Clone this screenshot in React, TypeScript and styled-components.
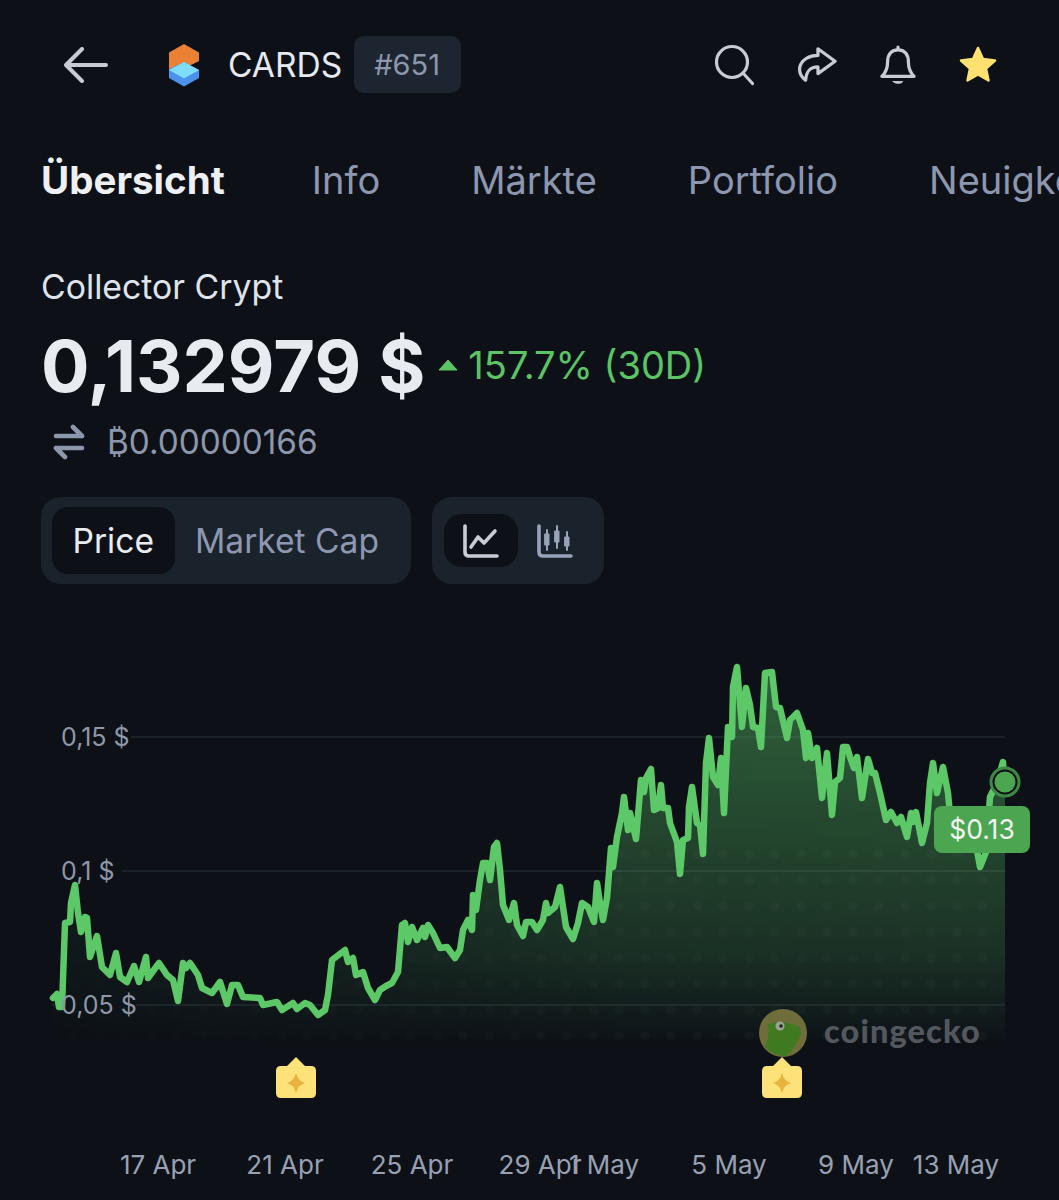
import React from 'react';
import styled, { createGlobalStyle } from 'styled-components';

const GlobalStyle = createGlobalStyle`
  html, body {
    margin: 0;
    padding: 0;
    background: #0d1117;
  }
  body {
    font-family: Inter, "Liberation Sans", sans-serif;
    overflow: hidden;
  }
`

// chart canvas starts at y=640 of the page, points are kept in page coordinates
const CHART_TOP = 640

const PRICE_POINTS: number[][] = [
  [53, 998], [57, 994], [59, 1007], [62, 1007], [65, 923], [70, 922], [71, 903], [75, 885], [78, 913], [81, 932],
  [85, 917], [87, 918], [90, 957], [97, 936], [102, 967], [110, 975], [116, 953], [120, 977], [127, 982], [134, 966],
  [139, 982], [146, 957], [148, 978], [159, 963], [167, 975], [173, 980], [178, 1001], [183, 963], [186, 968], [190, 963],
  [198, 975], [202, 988], [212, 993], [220, 982], [227, 1004], [232, 985], [238, 985], [243, 997], [260, 998], [263, 1005],
  [277, 1002], [282, 1010], [293, 1003], [297, 1009], [305, 1003], [310, 1005], [318, 1015], [325, 1010], [328, 995], [332, 960],
  [345, 950], [348, 962], [353, 958], [356, 975], [363, 972], [368, 988], [375, 1000], [380, 990], [386, 986], [392, 983],
  [398, 972], [402, 925], [405, 923], [408, 942], [412, 927], [417, 940], [423, 928], [425, 937], [428, 925], [433, 933],
  [440, 948], [447, 947], [455, 958], [460, 950], [463, 930], [468, 920], [472, 930], [473, 895], [476, 910], [480, 880],
  [483, 863], [487, 863], [490, 880], [494, 847], [497, 843], [500, 870], [503, 905], [509, 920], [514, 903], [517, 925],
  [523, 936], [526, 922], [532, 922], [537, 930], [543, 920], [546, 903], [548, 913], [555, 907], [560, 887], [566, 927],
  [573, 939], [578, 923], [582, 903], [588, 907], [594, 922], [597, 883], [600, 903], [603, 920], [607, 898], [611, 848],
  [613, 867], [617, 837], [622, 813], [624, 797], [628, 830], [630, 813], [636, 839], [641, 780], [644, 792], [646, 778],
  [651, 769], [654, 810], [658, 808], [661, 785], [663, 808], [668, 808], [670, 823], [677, 842], [680, 874], [683, 840],
  [688, 838], [689, 807], [692, 787], [697, 823], [700, 825], [703, 854], [706, 763], [709, 738], [713, 777], [718, 785],
  [721, 758], [724, 813], [728, 727], [732, 737], [733, 687], [737, 667], [742, 727], [746, 688], [750, 705], [753, 727],
  [758, 728], [761, 747], [765, 673], [772, 672], [776, 707], [780, 708], [787, 738], [790, 720], [797, 713], [803, 730],
  [806, 758], [808, 733], [812, 758], [817, 748], [822, 798], [827, 753], [832, 815], [835, 782], [840, 778], [843, 747],
  [847, 747], [850, 757], [854, 768], [857, 757], [862, 798], [868, 759], [872, 773], [875, 773], [880, 793], [886, 820],
  [891, 812], [897, 823], [901, 817], [907, 837], [911, 813], [913, 822], [916, 812], [922, 843], [927, 823], [930, 783],
  [933, 763], [937, 793], [943, 767], [948, 793], [950, 815], [958, 835], [968, 840], [976, 845], [980, 867], [986, 852],
  [990, 797], [997, 783], [1003, 762], [1004, 782],
]

const linePath = PRICE_POINTS.map(([x, y], i) => `${i === 0 ? 'M' : 'L'}${x} ${y}`).join(' ')
const areaPath = `${linePath} L1005 782 L1005 1045 L53 1045 Z`

const Y_LABELS = [
  { text: '0,15 $', y: 737, lineFrom: 131 },
  { text: '0,1 $', y: 871, lineFrom: 122 },
  { text: '0,05 $', y: 1005, lineFrom: 136 },
]

const X_LABELS = [
  { text: '17 Apr', x: 158 },
  { text: '21 Apr', x: 285 },
  { text: '25 Apr', x: 412 },
  { text: '29 Apr', x: 540 },
  { text: '1 May', x: 604 },
  { text: '5 May', x: 729 },
  { text: '9 May', x: 856 },
  { text: '13 May', x: 956 },
]

const TABS = ['Übersicht', 'Info', 'Märkte', 'Portfolio', 'Neuigkeiten']

const Marker = ({ x }: { x: number }) => (
  <g transform={`translate(${x} 0)`}>
    <path
      d="M0 1057 L9 1066 H15 Q20 1066 20 1071 V1093 Q20 1098 15 1098 H-15 Q-20 1098 -20 1093 V1071 Q-20 1066 -15 1066 H-9 Z"
      fill="#fde27a"
    />
    <path d="M0 1073 Q2 1081 9 1083 Q2 1085 0 1093 Q-2 1085 -9 1083 Q-2 1081 0 1073 Z" fill="#e8b33f" />
  </g>
)

const App = () => {
  return (
    <Page>
      <GlobalStyle />
      <TopBar>
        <BackIcon width="44" height="36" viewBox="0 0 44 36" fill="none" stroke="#c6cbd4" strokeWidth="4" strokeLinecap="round" strokeLinejoin="round">
          <path d="M42 18H3M18 2L2 18l16 16" />
        </BackIcon>
        <Logo width="34" height="44" viewBox="0 0 34 44">
          <path d="M17 1L32 9.500V18L24 22L10 26L2 30V9.500Z" fill="#ea8134" />
          <path d="M2 26L17 19L32 27V35L17 43.500L2 35Z" fill="#4a92ea" />
          <path d="M2 27L17 19L32 27L17 35.500Z" fill="#7fdcfc" />
        </Logo>
        <Symbol>CARDS</Symbol>
        <RankBadge>#651</RankBadge>
        <Actions>
          <svg width="40" height="42" viewBox="0 0 40 42" fill="none" stroke="#c6cbd4" strokeWidth="3.200" strokeLinecap="round">
            <circle cx="18" cy="18" r="15.500" />
            <path d="M29 29L38.500 39.500" />
          </svg>
          <svg width="40" height="38" viewBox="0 0 42 38" fill="none" stroke="#c6cbd4" strokeWidth="3.400" strokeLinejoin="round" strokeLinecap="round">
            <path d="M22 2L40 15L22 28V21C14 21 10 25 9 35C4 31 2 26 3 21C5 13 13 9 22 9Z" />
          </svg>
          <svg width="36" height="42" viewBox="0 0 38 42" fill="none" stroke="#c6cbd4" strokeWidth="3.400" strokeLinejoin="round" strokeLinecap="round">
            <path d="M19 2V5M19 5C11 5 8 11 8 18C8 25 6 29 2 33H36C32 29 30 25 30 18C30 11 27 5 19 5Z" />
            <path d="M14 38.500H24C23 41 15 41 14 38.500Z" fill="#c6cbd4" strokeWidth="1" />
          </svg>
          <svg width="38" height="38" viewBox="0 0 38 38">
            <path
              d="M19 2L24 13L36 14.500L27 22.500L29.500 34.500L19 28.500L8.500 34.500L11 22.500L2 14.500L14 13Z"
              fill="#fde272"
              stroke="#fde272"
              strokeWidth="2.500"
              strokeLinejoin="round"
            />
          </svg>
        </Actions>
      </TopBar>

      <Tabs>
        {TABS.map((tab, i) => (
          <Tab key={tab} $active={i === 0}>{tab}</Tab>
        ))}
      </Tabs>

      <CoinName>Collector Crypt</CoinName>
      <PriceRow>
        <Price>0,132979 $</Price>
        <Change>
          <svg width="20" height="12" viewBox="0 0 20 12">
            <path d="M10 1L19 11H1Z" fill="#5bc465" stroke="#5bc465" strokeLinejoin="round" />
          </svg>
          <span>157.7% (30D)</span>
        </Change>
      </PriceRow>
      <BtcRow>
        <svg width="32" height="36" viewBox="0 0 32 36" fill="none" stroke="#8d97ac" strokeWidth="4.600" strokeLinecap="round" strokeLinejoin="round">
          <path d="M3 12H29M20 3L29 12M29 24H3M12 33L3 24" />
        </svg>
        <BtcValue>₿0.00000166</BtcValue>
      </BtcRow>

      <Toggles>
        <ToggleCard $pad={11}>
          <TextOption $active>Price</TextOption>
          <TextOption>Market Cap</TextOption>
        </ToggleCard>
        <ToggleCard $pad={12}>
          <IconOption $active>
            <svg width="36" height="34" viewBox="0 0 36 34" fill="none" stroke="#c8ccd6" strokeWidth="3.600" strokeLinecap="round" strokeLinejoin="round">
              <path d="M2 2V28Q2 32 6 32H34" />
              <path d="M8 23L15 13L21 19L32 7" />
            </svg>
          </IconOption>
          <IconOption>
            <svg width="36" height="34" viewBox="0 0 36 34" fill="none" stroke="#98a2b8" strokeWidth="3.600" strokeLinecap="round" strokeLinejoin="round">
              <path d="M2 2V28Q2 32 6 32H34" />
              <path d="M10 6V26M20 2V24M30 8V26" strokeWidth="2" />
              <rect x="8" y="10" width="4" height="11" fill="#98a2b8" strokeWidth="1" />
              <rect x="18" y="7" width="4" height="11" fill="#98a2b8" strokeWidth="1" />
              <rect x="28" y="13" width="4" height="9" fill="#98a2b8" strokeWidth="1" />
            </svg>
          </IconOption>
        </ToggleCard>
      </Toggles>

      <Chart>
        <ChartSvg viewBox={`0 ${CHART_TOP} 1059 560`} width="1059" height="560">
          <defs>
            <linearGradient id="areaFade" gradientUnits="userSpaceOnUse" x1="0" y1="667" x2="0" y2="1045">
              <stop offset="0" stopColor="#5cc868" stopOpacity="0.46" />
              <stop offset="0.75" stopColor="#5cc868" stopOpacity="0.18" />
              <stop offset="1" stopColor="#5cc868" stopOpacity="0" />
            </linearGradient>
            <linearGradient id="sideFade" gradientUnits="userSpaceOnUse" x1="53" y1="0" x2="1005" y2="0">
              <stop offset="0" stopColor="#fff" stopOpacity="0.2" />
              <stop offset="0.6" stopColor="#fff" stopOpacity="0.95" />
              <stop offset="1" stopColor="#fff" stopOpacity="1" />
            </linearGradient>
            <mask id="sideMask" maskUnits="userSpaceOnUse" x="0" y="640" width="1059" height="560">
              <rect x="0" y="640" width="1059" height="560" fill="url(#sideFade)" />
            </mask>
            <pattern id="areaDots" patternUnits="userSpaceOnUse" x="8" y="997" width="26" height="26">
              <circle cx="13" cy="13" r="4.500" fill="#ffffff" fillOpacity="0.02" />
            </pattern>
            <clipPath id="areaClip">
              <path d={areaPath} />
            </clipPath>
          </defs>

          {Y_LABELS.map(label => (
            <path key={label.y} d={`M${label.lineFrom} ${label.y}H1005`} stroke="#20272f" strokeWidth="1.500" />
          ))}
          <path d="M52 1005H61" stroke="#20272f" strokeWidth="1.500" />

          <g mask="url(#sideMask)">
            <path d={areaPath} fill="url(#areaFade)" />
            <rect x="53" y="840" width="952" height="205" fill="url(#areaDots)" clipPath="url(#areaClip)" />
          </g>
          <path d={linePath} fill="none" stroke="#5cc868" strokeWidth="6.500" strokeLinejoin="round" strokeLinecap="round" />

          <circle cx="1005" cy="782" r="14" fill="#0d1117" stroke="#3d8a46" strokeWidth="3" />
          <circle cx="1005" cy="782" r="10.500" fill="#4ca651" />

          <circle cx="783" cy="1033" r="24" fill="#6f6e3a" />
          <path d="M768 1024Q784 1020 800 1027L801 1034Q796 1046 787 1056Q775 1057 765 1047Q770 1036 768 1024Z" fill="#3f7a20" />
          <circle cx="780" cy="1026" r="4.500" fill="#9aa39a" />
          <circle cx="781" cy="1026" r="1.800" fill="#1c2a18" />

          <Marker x={296} />
          <Marker x={782} />
        </ChartSvg>

        {Y_LABELS.map(label => (
          <YLabel key={label.y} $y={label.y - CHART_TOP}>{label.text}</YLabel>
        ))}
        {X_LABELS.map(label => (
          <XLabel key={label.text} $x={label.x}>{label.text}</XLabel>
        ))}
        <PriceTag>$0.13</PriceTag>
        <Watermark>coingecko</Watermark>
      </Chart>
    </Page>
  )
}

export default App

const Page = styled.div`
  width: 1059px;
  height: 1200px;
  overflow: hidden;
  background-color: #0d1117;
  color: #e6e9ef;
`
const TopBar = styled.div`
  display: flex;
  align-items: center;
  height: 57px;
  margin-top: 36px;
  padding: 0 62px 0 64px;
`
const BackIcon = styled.svg`
  flex-shrink: 0;
`
const Logo = styled.svg`
  flex-shrink: 0;
  margin-left: 59px;
`
const Symbol = styled.span`
  margin-left: 27px;
  font-size: 33.500px;
  color: #e6e9ef;
`
const RankBadge = styled.span`
  margin-left: 12px;
  padding: 0 21px 0 20px;
  height: 57px;
  line-height: 57px;
  font-size: 29px;
  color: #8d97ac;
  background-color: #1c2530;
  border-radius: 10px;
`
const Actions = styled.div`
  display: flex;
  align-items: center;
  gap: 43px;
  margin-left: auto;
`
const Tabs = styled.div`
  display: flex;
  gap: 91px;
  margin-top: 64px;
  padding-left: 41px;
  white-space: nowrap;
`
const Tab = styled.span<{ $active?: boolean }>`
  font-size: ${props => (props.$active ? 38.5 : 38)}px;
  line-height: 46px;
  font-weight: ${props => (props.$active ? 700 : 400)};
  margin-right: ${props => (props.$active ? -4 : 0)}px;
  color: ${props => (props.$active ? '#eef0f4' : '#8d97b0')};
`
const CoinName = styled.div`
  margin-top: 64px;
  padding-left: 41px;
  font-size: 33.800px;
  line-height: 40px;
  color: #dfe3ea;
`
const PriceRow = styled.div`
  display: flex;
  align-items: center;
  gap: 13px;
  margin-top: 18px;
  padding-left: 41px;
  height: 80px;
`
const Price = styled.span`
  font-size: 72px;
  font-weight: 700;
  color: #e8ebf0;
`
const Change = styled.span`
  display: flex;
  align-items: center;
  gap: 10px;
  font-size: 38px;
  color: #5bc465;
`
const BtcRow = styled.div`
  display: flex;
  align-items: center;
  gap: 22px;
  margin-top: 15px;
  padding-left: 53px;
  height: 44px;
`
const BtcValue = styled.span`
  font-size: 33.300px;
  color: #8d97ac;
`
const Toggles = styled.div`
  display: flex;
  gap: 21px;
  margin-top: 33px;
  padding-left: 41px;
`
const ToggleCard = styled.div<{ $pad: number }>`
  display: flex;
  align-items: center;
  height: 87px;
  padding: 0 ${props => props.$pad}px;
  background-color: #1a222c;
  border-radius: 20px;
`
const TextOption = styled.span<{ $active?: boolean }>`
  display: flex;
  align-items: center;
  height: 67px;
  padding: 0 20.500px;
  font-size: 33.600px;
  color: ${props => (props.$active ? '#e8ebf0' : '#8d97b0')};
  background-color: ${props => (props.$active ? '#0d1117' : 'transparent')};
  border-radius: 16px;
`
const IconOption = styled.span<{ $active?: boolean }>`
  display: flex;
  align-items: center;
  justify-content: center;
  width: 74px;
  height: 53px;
  background-color: ${props => (props.$active ? '#0d1117' : 'transparent')};
  border-radius: 18px;
`
const Chart = styled.div`
  position: relative;
  height: 560px;
  margin-top: 56px;
`
const ChartSvg = styled.svg`
  display: block;
`
const YLabel = styled.span<{ $y: number }>`
  position: absolute;
  left: 61px;
  top: ${props => props.$y}px;
  transform: translateY(-50%);
  font-size: 25px;
  color: #8d97a8;
`
const XLabel = styled.span<{ $x: number }>`
  position: absolute;
  left: ${props => props.$x}px;
  top: 524px;
  transform: translate(-50%, -50%);
  font-size: 26px;
  white-space: nowrap;
  color: #98a1b3;
`
const PriceTag = styled.div`
  position: absolute;
  left: 934px;
  top: 166px;
  width: 96px;
  height: 47px;
  line-height: 47px;
  text-align: center;
  font-size: 26.500px;
  color: #f3f6f3;
  background-color: #4ca651;
  border-radius: 8px;
`
const Watermark = styled.span`
  position: absolute;
  left: 824px;
  top: 372px;
  font-family: Lato, "Open Sans", sans-serif;
  font-size: 32.500px;
  font-weight: 900;
  line-height: 38px;
  letter-spacing: 1.100px;
  color: #53585f;
`
